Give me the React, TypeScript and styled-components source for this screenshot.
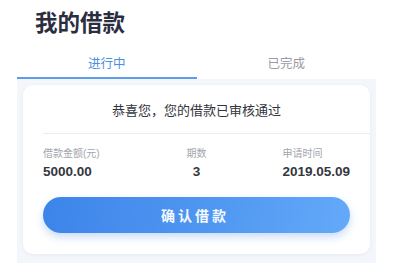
import styled, { createGlobalStyle } from "styled-components";

const GlobalStyle = createGlobalStyle`
    body {
        margin: 0;
        background: #ffffff;
        font-family: "Liberation Sans", "Noto Sans CJK SC", sans-serif;
    }
`

const info = [
    { label: "借款金额(元)", value: "5000.00" },
    { label: "期数", value: "3" },
    { label: "申请时间", value: "2019.05.09" },
]

function App() {
    return (
        <Page>
            <GlobalStyle />
            <Title>我的借款</Title>
            <Tabs>
                <Tab $active>进行中</Tab>
                <Tab>已完成</Tab>
            </Tabs>
            <Panel>
                <Card>
                    <Message>恭喜您，您的借款已审核通过</Message>
                    <Divider />
                    <InfoRow>
                        {info.map((item, i) => (
                            <InfoItem key={item.label} $pos={i}>
                                <Label>{item.label}</Label>
                                <Value>{item.value}</Value>
                            </InfoItem>
                        ))}
                    </InfoRow>
                    <ConfirmBtn>确认借款</ConfirmBtn>
                </Card>
            </Panel>
        </Page>
    )
}

export default App

const Page = styled.div`
    width: 400px;
    height: 266px;
    overflow: hidden;
    padding-left: 17px;
    box-sizing: border-box;
`

const Title = styled.h1`
    margin: 0;
    padding: 10px 0 0 18px;
    font-size: 22.5px;
    line-height: 28px;
    font-weight: bold;
    color: #2b2e3f;
`

const Tabs = styled.div`
    display: flex;
    width: 359px;
    margin-top: 9px;
`

const Tab = styled.div<{ $active?: boolean }>`
    flex: 1;
    height: 30px;
    display: flex;
    align-items: center;
    justify-content: center;
    font-size: 12.5px;
    color: ${p => (p.$active ? "#4a8fe2" : "#9a9ca3")};
    border-bottom: 2px solid ${p => (p.$active ? "#5b9cec" : "transparent")};
`

const Panel = styled.div`
    width: 359px;
    background: #f3f6fa;
    padding: 6px 6px 9px;
    box-sizing: border-box;
`

const Card = styled.div`
    background: #ffffff;
    border-radius: 10px;
    box-shadow: 0 1px 4px rgba(0, 0, 0, 0.05);
    padding-bottom: 21px;
`

const Message = styled.div`
    height: 48px;
    display: flex;
    align-items: center;
    justify-content: center;
    font-size: 13px;
    color: #33353d;
`

const Divider = styled.div`
    margin-left: 20px;
    border-top: 1px solid #ececef;
`

const InfoRow = styled.div`
    display: grid;
    grid-template-columns: 1fr auto 1fr;
    padding: 13px 20px 0;
`

const InfoItem = styled.div<{ $pos: number }>`
    display: flex;
    flex-direction: column;
    gap: 2px;
    align-items: ${p => (p.$pos === 1 ? "center" : "flex-start")};
    justify-self: ${p => (p.$pos === 0 ? "start" : p.$pos === 1 ? "center" : "end")};
`

const Label = styled.span`
    font-size: 10px;
    line-height: 14px;
    color: #a3a5ab;
`

const Value = styled.span`
    font-size: 13.5px;
    line-height: 18px;
    font-weight: bold;
    color: #35373f;
`

const ConfirmBtn = styled.button`
    display: block;
    width: calc(100% - 40px);
    height: 36px;
    margin: 16px 20px 0;
    border: none;
    border-radius: 18px;
    background: linear-gradient(100deg, #3d84ea 0%, #5299f2 60%, #64a9f9 100%);
    box-shadow: 0 4px 8px rgba(60, 130, 230, 0.28);
    color: #f4f8ff;
    font-family: "Noto Sans CJK SC", sans-serif;
    font-size: 14px;
    font-weight: bold;
    letter-spacing: 3px;
    padding-left: 3px;
    cursor: pointer;
`
